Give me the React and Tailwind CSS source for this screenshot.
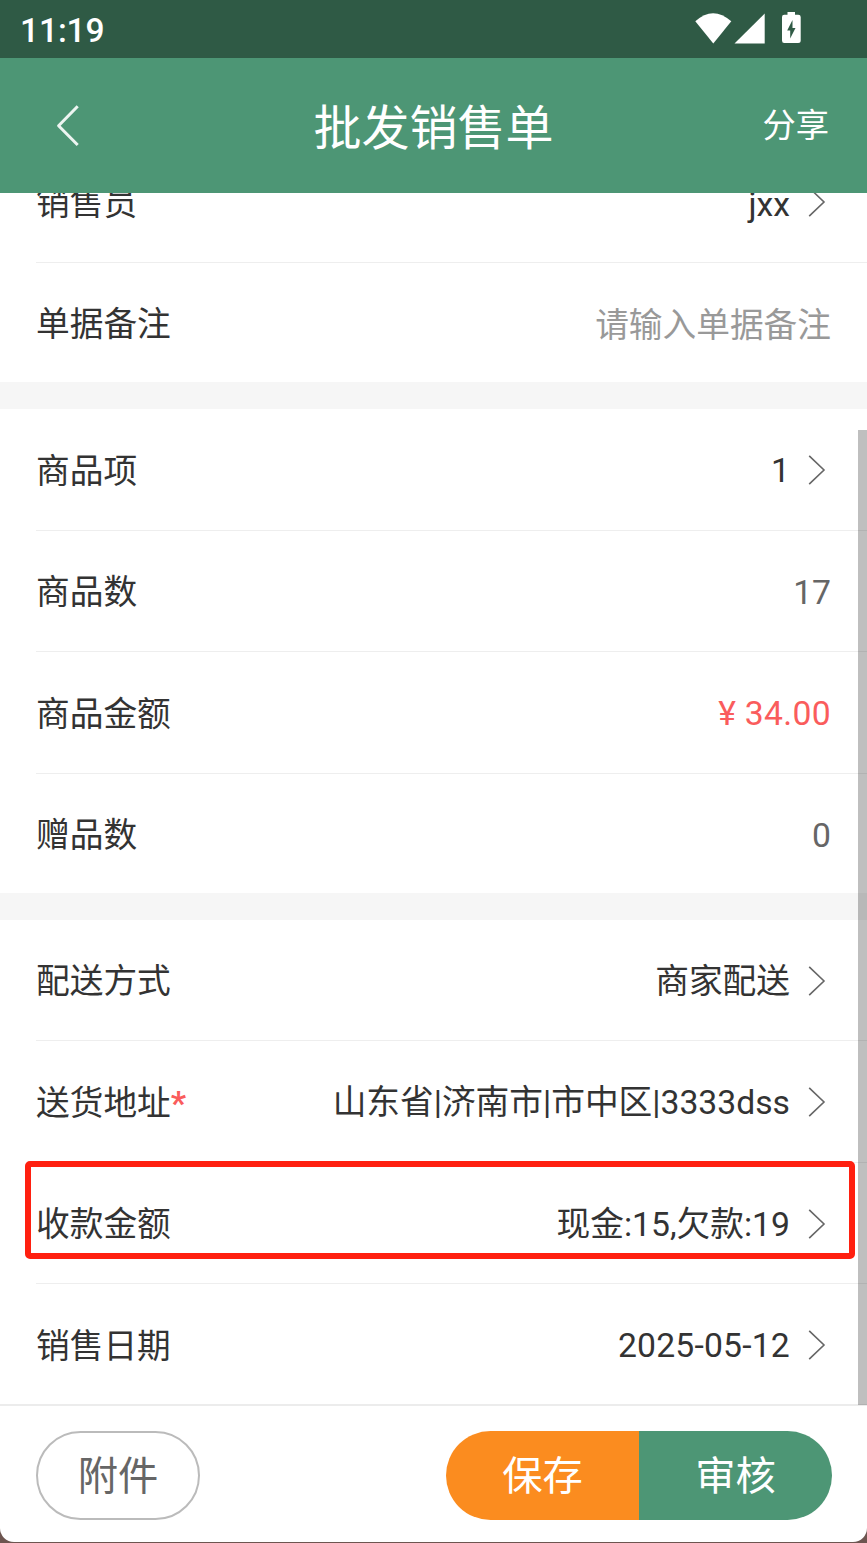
function BackIcon() {
  return (
    <svg width="24" height="42" viewBox="0 0 24 42" fill="none" stroke="#fff" strokeOpacity="0.9" strokeWidth="3">
      <path d="M21.7 1.2L2.6 20.8L21.7 40" strokeLinejoin="round" />
    </svg>
  )
}

function ArrowIcon() {
  return (
    <svg className="mt-px ml-[18px] mr-[5px] shrink-0" width="18" height="30" viewBox="0 0 18 30" fill="none" stroke="#666" strokeWidth="1.6">
      <path d="M1.2 0.8L16 15L1.2 29.2" />
    </svg>
  )
}

function StatusBar() {
  return (
    <div className="flex h-[58px] shrink-0 items-center justify-between bg-[#2f5a45] pl-5 pr-[65px] text-white">
      <span className="pt-[3px] text-[33.5px] leading-none font-medium tracking-[-0.1px]">11:19</span>
      <div className="flex items-center">
        <svg width="107" height="34" viewBox="0 0 107 34" fill="#fff">
          <path d="M0.3 9.3Q18 -7 36.3 9.3L18.3 31.5Z" />
          <path d="M39.5 31.5L69.7 1.5V31.5Z" />
          <path
            fillRule="evenodd"
            d="M92.5 0H100V2.7H103.2Q105.7 2.7 105.7 5V28.5Q105.7 31 103.2 31H89.2Q87 31 87 28.5V5Q87 2.7 89.2 2.7H92.5ZM97.5 8L92.2 18.5H95.2V26.5L100.5 16H97.5Z"
          />
        </svg>
      </div>
    </div>
  )
}

function Row({ label, value, arrow, required, color = 'text-[#333]', shift = 'pt-[3px]' }) {
  return (
    <div className="ml-9 flex h-[121.4px] shrink-0 items-center justify-between border-b border-[#eee] pr-9">
      <span className="pt-1 text-[#333]">
        {label}
        {required && <span className="font-bold text-[#fa5c5c]">*</span>}
      </span>
      <div className="flex items-center">
        <span className={`${color} ${shift}`}>{value}</span>
        {arrow && <ArrowIcon />}
      </div>
    </div>
  )
}

function Gap() {
  return <div className="relative -mt-[2px] h-[27px] shrink-0 bg-[#f6f6f6]" />
}

export default function App() {
  return (
    <div className="h-[1543px] w-[867px] overflow-hidden bg-[#6d5550] font-[Roboto,'Noto_Sans_CJK_SC',sans-serif]">
      <div className="flex h-[1542px] flex-col overflow-hidden rounded-b-[14px] bg-white">
        <StatusBar />
        <header className="grid h-[135px] shrink-0 grid-cols-[1fr_auto_1fr] items-center bg-[#4d9675] px-[38px] text-white">
          <div className="pl-[18px]">
            <BackIcon />
          </div>
          <h1 className="pt-[6px] text-[48px] leading-none">批发销售单</h1>
          <span className="justify-self-end text-[33.3px] leading-none">分享</span>
        </header>

        <main className="relative flex h-[1212px] shrink-0 flex-col overflow-hidden text-[33.7px] leading-none">
          <div className="-mt-[51.3px] flex shrink-0 flex-col">
            <Row label="销售员" value="jxx" arrow shift="pt-[5px]" />
            <Row label="单据备注" value="请输入单据备注" color="text-[#999]" shift="pt-[5px]" />
          </div>
          <Gap />
          <Row label="商品项" value="1" arrow />
          <Row label="商品数" value="17" color="text-[#666]" />
          <Row label="商品金额" value="¥ 34.00" color="text-[#fa5c5c] tracking-[0.3px]" />
          <Row label="赠品数" value="0" color="text-[#666]" />
          <Gap />
          <Row label="配送方式" value="商家配送" arrow shift="pt-1" />
          <Row label="送货地址" value="山东省|济南市|市中区|3333dss" arrow required />
          <Row label="收款金额" value="现金:15,欠款:19" arrow />
          <Row label="销售日期" value="2025-05-12" arrow color="text-[#333] tracking-[0.2px]" />
          <div className="absolute right-0 top-[237px] bottom-0 w-[9px] bg-black/25" />
          <div className="absolute left-[25px] top-[968px] h-[98px] w-[830px] rounded-[5px] border-[6px] border-[#ff2010]" />
        </main>

        <footer className="-mt-px flex flex-1 items-start justify-between border-t-2 border-[#ececec] pr-[35px] pl-9 pt-[24.5px] text-[40.3px] leading-none">
          <button className="h-[89.5px] w-[164px] rounded-full border-2 border-[#bbb] pt-[3px] text-[#666]">附件</button>
          <div className="flex h-[89.5px] w-[386px] overflow-hidden rounded-full text-white">
            <button className="flex-1 bg-[#fb8c1f] pt-[3px]">保存</button>
            <button className="flex-1 bg-[#4d9675] pt-[3px]">审核</button>
          </div>
        </footer>
      </div>
    </div>
  )
}
